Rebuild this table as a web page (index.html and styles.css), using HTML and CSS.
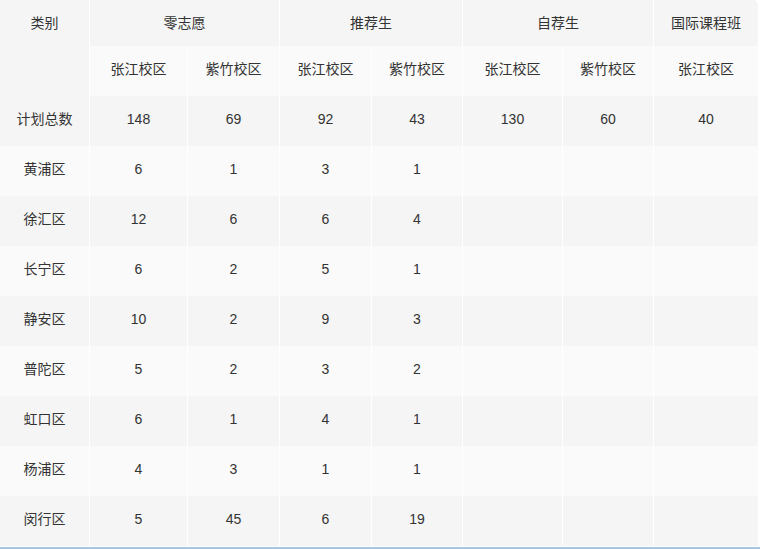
FILE: index.html
```html
<!DOCTYPE html>
<html lang="zh-CN">
<head>
<meta charset="utf-8">
<title>招生计划</title>
<link rel="stylesheet" href="styles.css">
</head>
<body>
<table class="plan">
  <colgroup>
    <col class="c1"><col class="c2"><col class="c3"><col class="c4"><col class="c5"><col class="c6"><col class="c7"><col class="c8">
  </colgroup>
  <thead>
    <tr class="h1">
      <th class="first cat" rowspan="2">类别</th>
      <th colspan="2">零志愿</th>
      <th colspan="2">推荐生</th>
      <th colspan="2">自荐生</th>
      <th class="corner">国际课程班</th>
    </tr>
    <tr class="h2">
      <th>张江校区</th><th>紫竹校区</th><th>张江校区</th><th>紫竹校区</th><th>张江校区</th><th>紫竹校区</th><th>张江校区</th>
    </tr>
  </thead>
  <tbody>
    <tr class="odd"><td class="first">计划总数</td><td>148</td><td>69</td><td>92</td><td>43</td><td>130</td><td>60</td><td>40</td></tr>
    <tr class="even"><td class="first">黄浦区</td><td>6</td><td>1</td><td>3</td><td>1</td><td></td><td></td><td></td></tr>
    <tr class="odd"><td class="first">徐汇区</td><td>12</td><td>6</td><td>6</td><td>4</td><td></td><td></td><td></td></tr>
    <tr class="even"><td class="first">长宁区</td><td>6</td><td>2</td><td>5</td><td>1</td><td></td><td></td><td></td></tr>
    <tr class="odd"><td class="first">静安区</td><td>10</td><td>2</td><td>9</td><td>3</td><td></td><td></td><td></td></tr>
    <tr class="even"><td class="first">普陀区</td><td>5</td><td>2</td><td>3</td><td>2</td><td></td><td></td><td></td></tr>
    <tr class="odd"><td class="first">虹口区</td><td>6</td><td>1</td><td>4</td><td>1</td><td></td><td></td><td></td></tr>
    <tr class="even"><td class="first">杨浦区</td><td>4</td><td>3</td><td>1</td><td>1</td><td></td><td></td><td></td></tr>
    <tr class="odd"><td class="first">闵行区</td><td>5</td><td>45</td><td>6</td><td>19</td><td></td><td></td><td></td></tr>
  </tbody>
</table>
<div class="rule"></div>
</body>
</html>
```
FILE: styles.css
```css
html, body {
  margin: 0;
  padding: 0;
  background: #ffffff;
}
body {
  font-family: "Liberation Sans", "Noto Sans CJK SC", sans-serif;
  font-size: 14px;
  line-height: 20px;
  color: #333333;
}
.plan {
  width: 758px;
  table-layout: fixed;
  border-collapse: separate;
  border-spacing: 0;
}
.c1 { width: 89px; }
.c2 { width: 98px; }
.c3 { width: 92px; }
.c4 { width: 92px; }
.c5 { width: 91px; }
.c6 { width: 100px; }
.c7 { width: 91px; }
.c8 { width: 105px; }
.plan th,
.plan td {
  box-sizing: border-box;
  padding: 0 0 5px 0;
  text-align: center;
  vertical-align: middle;
  font-weight: normal;
  border-left: 1px solid #ffffff;
  height: 50px;
  background: #f5f5f5;
}
.plan .first {
  border-left: none;
}
.plan .h1 th {
  height: 46px;
  padding: 0;
  background: #f5f5f5;
}
.plan .h2 th {
  background: #fafafa;
}
.plan .h1 th.cat {
  vertical-align: top;
  padding-top: 13px;
  background: #f5f5f5;
}
.plan .corner {
  border-top-right-radius: 5px;
}
.plan .odd td {
  background: #f5f5f5;
}
.plan .even td {
  background: #fafafa;
}
.rule {
  margin-top: 1px;
  height: 2px;
  background: #a9c5e4;
}
```
